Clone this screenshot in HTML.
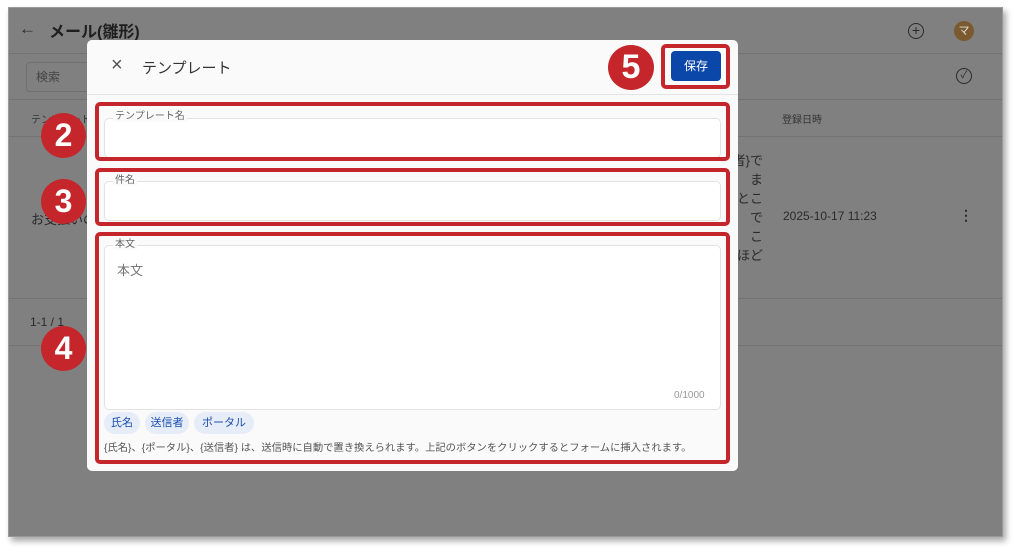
<!DOCTYPE html>
<html><head><meta charset="utf-8"><style>
*{margin:0;padding:0;box-sizing:border-box}
body{width:1024px;height:555px;background:#fff;position:relative;overflow:hidden;font-family:"Liberation Sans","Noto Sans CJK JP",sans-serif;}
.frame{position:absolute;left:8px;top:7px;width:995px;height:530px;background:#808080;box-shadow:3px 4px 6px rgba(0,0,0,.35);border:1px solid #999}
.abs{position:absolute}
.line{position:absolute;left:0;right:0;height:1px;background:#737373}
.t{position:absolute;color:#2a2a2a;white-space:nowrap}
.dlg{position:absolute;left:87px;top:40px;width:651px;height:431px;background:#fafafa;border-radius:5px}
.red{position:absolute;border:4px solid #c4262b;border-radius:5px}
.circ{position:absolute;background:#c4262b;border-radius:50%;color:#fff;font-weight:bold;text-align:center;font-family:"Liberation Sans",sans-serif}
.field{position:absolute;left:104px;width:617px;background:#fff;border:1px solid #e2e2e2;border-radius:5px}
.lbl{position:absolute;font-size:10px;color:#666;background:#fafafa;padding:0 2px;line-height:10px}
.chip{position:absolute;top:412px;height:22px;background:#e6ecf8;border-radius:11px;color:#1a50b0;font-size:11px;line-height:22px;text-align:center}
</style></head><body>
<div class="frame">
  <div class="t" style="left:10px;top:11px;font-size:17px">←</div>
  <div class="t" style="left:40px;top:10px;font-size:16px;font-weight:bold;color:#1e1e1e">メール(雛形)</div>
  <div class="abs" style="left:899px;top:15px;width:16px;height:16px;border:1.5px solid #2a2a2a;border-radius:50%;text-align:center;line-height:12px;font-size:14px;color:#2a2a2a">+</div>
  <div class="abs" style="left:945px;top:13px;width:20px;height:20px;background:#7a5a2e;border-radius:50%;color:#ddd;font-size:11px;text-align:center;line-height:20px">マ</div>
  <div class="line" style="top:45px"></div>
  <div class="abs" style="left:17px;top:54px;width:100px;height:30px;border:1px solid #707070;border-radius:4px"></div>
  <div class="t" style="left:27px;top:60px;font-size:12px;color:#444">検索</div>
  <div class="abs" style="left:947px;top:60px;width:16px;height:16px;border:1.5px solid #2a2a2a;border-radius:50%;font-size:10px;text-align:center;line-height:13px;color:#2a2a2a">✓</div>
  <div class="line" style="top:91px"></div>
  <div class="t" style="left:22px;top:103px;font-size:10px;color:#333">テンプレート</div>
  <div class="t" style="left:773px;top:103px;font-size:10px;color:#333">登録日時</div>
  <div class="line" style="top:128px"></div>
  <div class="t" style="left:22px;top:201px;font-size:13px">お支払いの</div>
  <div class="t" style="left:718px;top:143px;font-size:13px;line-height:19px;text-align:right;width:36px">{者}で<br>ま<br>とこ<br>で<br>こ<br>ほど</div>
  <div class="t" style="left:774px;top:201px;font-size:12px">2025-10-17 11:23</div>
  <div class="t" style="left:950px;top:199px;font-size:14px;font-weight:bold">⋮</div>
  <div class="line" style="top:290px"></div>
  <div class="t" style="left:21px;top:307px;font-size:12px">1-1 / 1</div>
  <div class="line" style="top:337px"></div>
</div>

<div class="dlg">
  <div class="t" style="left:24px;top:14px;font-size:20px;color:#555;font-weight:300">×</div>
  <div class="t" style="left:55px;top:17px;font-size:15px;color:#333">テンプレート</div>
  <div class="abs" style="left:0;right:0;top:54px;height:1px;background:#e4e4e4"></div>
  <div class="abs" style="left:584px;top:11px;width:50px;height:30px;background:#0b47a8;border-radius:4px;color:#fff;font-size:12px;text-align:center;line-height:30px">保存</div>
</div>

<div class="field" style="top:118px;height:40px"></div>
<div class="lbl" style="left:113px;top:112px">テンプレート名</div>
<div class="field" style="top:181px;height:40px"></div>
<div class="lbl" style="left:113px;top:176px">件名</div>
<div class="field" style="top:245px;height:165px"></div>
<div class="lbl" style="left:113px;top:240px">本文</div>
<div class="t" style="left:117px;top:260px;font-size:13px;color:#777">本文</div>
<div class="t" style="left:674px;top:390px;font-size:10px;color:#999">0/1000</div>
<div class="chip" style="left:104px;width:36px">氏名</div>
<div class="chip" style="left:145px;width:44px">送信者</div>
<div class="chip" style="left:194px;width:60px">ポータル</div>
<div class="t" style="left:104px;top:439px;font-size:10.3px;color:#555">{氏名}、{ポータル}、{送信者} は、送信時に自動で置き換えられます。上記のボタンをクリックするとフォームに挿入されます。</div>

<div class="red" style="left:95px;top:102px;width:635px;height:59px"></div>
<div class="red" style="left:95px;top:168px;width:635px;height:58px"></div>
<div class="red" style="left:95px;top:232px;width:635px;height:232px"></div>
<div class="red" style="left:661px;top:44px;width:69px;height:45px"></div>

<div class="circ" style="left:41px;top:113px;width:45px;height:45px;font-size:32px;line-height:45px">2</div>
<div class="circ" style="left:41px;top:179px;width:45px;height:45px;font-size:32px;line-height:45px">3</div>
<div class="circ" style="left:41px;top:326px;width:45px;height:45px;font-size:32px;line-height:45px">4</div>
<div class="circ" style="left:608px;top:45px;width:46px;height:45px;font-size:34px;line-height:45px">5</div>
</body></html>
